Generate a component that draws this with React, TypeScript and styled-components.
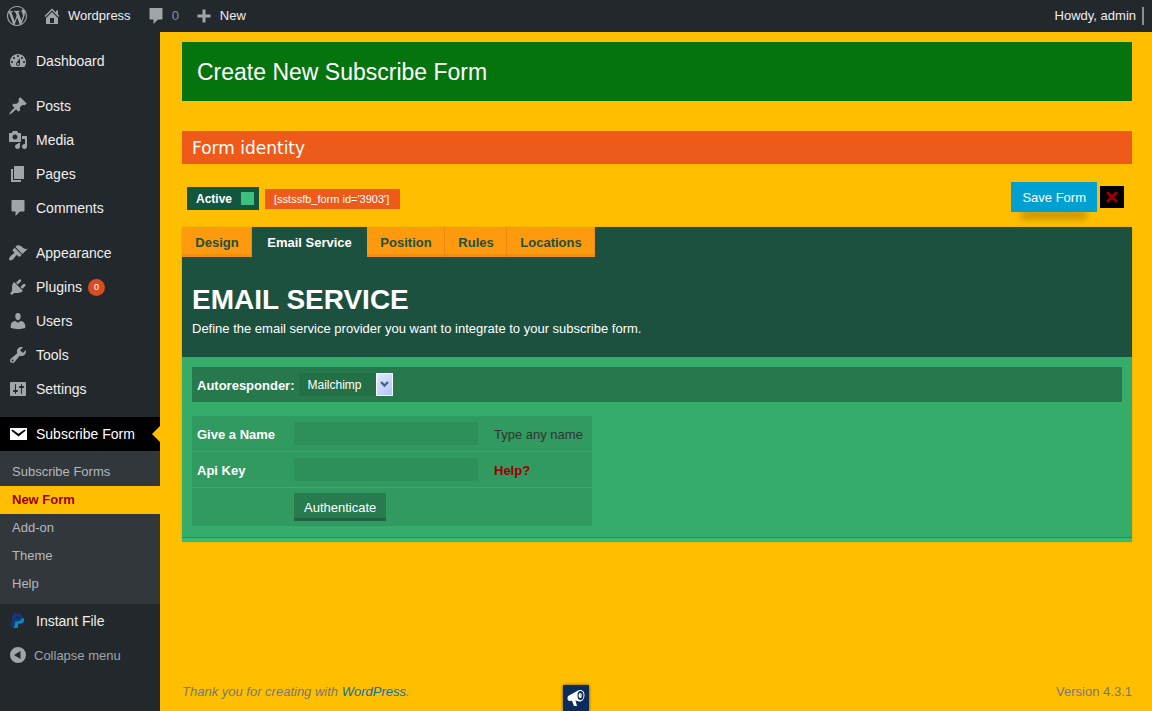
import React from "react";
import styled, { createGlobalStyle, css } from "styled-components";

const GlobalStyle = createGlobalStyle`
  *, *::before, *::after { box-sizing: border-box; }
  html, body { margin: 0; padding: 0; }
  body {
    background: #ffbf00;
    color: #444;
    font-family: "Liberation Sans", Arial, sans-serif;
    font-size: 13px;
    line-height: 18px;
  }
  a { text-decoration: none; }
  h1, h2, p, ul { margin: 0; padding: 0; }
  ul { list-style: none; }
  button, input, select { font-family: inherit; margin: 0; border: 0; border-radius: 0; }
`;

const icons = {
  wordpress:
    "M20 10c0-5.51-4.49-10-10-10C4.48 0 0 4.49 0 10c0 5.52 4.48 10 10 10 5.51 0 10-4.48 10-10zM7.78 15.37L4.37 6.22c.55-.02 1.17-.08 1.17-.08.5-.06.44-1.13-.06-1.11 0 0-1.45.11-2.37.11-.18 0-.37 0-.58-.01C4.12 2.69 6.87 1.11 10 1.11c2.33 0 4.45.87 6.05 2.34-.68-.11-1.65.39-1.65 1.58 0 .74.45 1.36.9 2.1.35.61.55 1.36.55 2.46 0 1.49-1.4 5-1.4 5l-3.03-8.37c.54-.02.82-.17.82-.17.5-.05.44-1.25-.06-1.22 0 0-1.44.12-2.38.12-.87 0-2.33-.12-2.33-.12-.5-.03-.56 1.2-.06 1.22l.92.08 1.26 3.41zM17.41 10c.24-.64.74-1.87.43-4.25.7 1.29 1.05 2.71 1.05 4.25 0 3.29-1.73 6.24-4.4 7.78.97-2.59 1.94-5.2 2.92-7.78zM6.1 18.09C3.12 16.65 1.11 13.53 1.11 10c0-1.3.23-2.48.72-3.59C3.25 10.3 4.67 14.2 6.1 18.09zm4.03-6.63l2.58 6.98c-.86.29-1.76.45-2.71.45-.79 0-1.57-.11-2.29-.33.81-2.38 1.62-4.74 2.42-7.1z",
  home: "M16 8.5l1.53 1.53-1.06 1.06L10 4.6l-6.47 6.49-1.06-1.06L10 2.5l4 4v-2h2v4zm-6-2.46l6 5.99V18H4v-5.97zM12 17v-5H8v5h4z",
  comment:
    "M4.5 2h11c.6 0 1 .4 1 1v9.5c0 .6-.4 1-1 1H12L7.500 18v-4.500h-3c-.6 0-1-.4-1-1V3c0-.6.4-1 1-1z",
  plus: "M8.5 3.5h3v5h5v3h-5v5h-3v-5h-5v-3h5z",
  dashboard:
    "M3.76 16h12.48c1.1-1.37 1.76-3.11 1.76-5 0-4.42-3.58-8-8-8s-8 3.58-8 8c0 1.89.66 3.63 1.76 5zM10 4c.55 0 1 .45 1 1s-.45 1-1 1-1-.45-1-1 .45-1 1-1zM6 6c.55 0 1 .45 1 1s-.45 1-1 1-1-.45-1-1 .45-1 1-1zm8 0c.55 0 1 .45 1 1s-.45 1-1 1-1-.45-1-1 .45-1 1-1zm-5.37 5.55L12 7v6c0 1.1-.9 2-2 2s-2-.9-2-2c0-.57.24-1.08.63-1.45zM4 10c.55 0 1 .45 1 1s-.45 1-1 1-1-.45-1-1 .45-1 1-1zm12 0c.55 0 1 .45 1 1s-.45 1-1 1-1-.45-1-1 .45-1 1-1zm-5 3c0-.55-.45-1-1-1s-1 .45-1 1 .45 1 1 1 1-.45 1-1z",
  posts:
    "M10.44 3.02l1.82-1.82 6.36 6.35-1.83 1.82c-1.05-.68-2.48-.57-3.41.36l-.75.75c-.92.93-1.04 2.35-.35 3.41l-1.83 1.82-2.41-2.41-2.8 2.79c-.42.42-3.38 2.71-3.8 2.29s1.86-3.39 2.28-3.81l2.79-2.79L4.1 9.36l1.83-1.82c1.05.69 2.48.57 3.4-.36l.75-.75c.93-.92 1.05-2.35.36-3.41z",
  media:
    "M13 11V4c0-.55-.45-1-1-1h-1.67L9 1H5L3.67 3H2c-.55 0-1 .45-1 1v7c0 .55.45 1 1 1h10c.55 0 1-.45 1-1zM7 4.5c1.38 0 2.5 1.12 2.5 2.5S8.38 9.5 7 9.5 4.5 8.38 4.5 7 5.62 4.5 7 4.5zM14 6h5v10.5c0 1.38-1.12 2.5-2.5 2.5S14 17.88 14 16.5s1.12-2.5 2.5-2.5c.17 0 .34.02.5.05V9h-3V6zm-4 8.05V13h2v3.5c0 1.38-1.12 2.5-2.5 2.5S7 17.88 7 16.5 8.12 14 9.5 14c.17 0 .34.02.5.05z",
  pages: "M6 15V2h10v13H6zm-1 1h8v2H3V5h2v11z",
  appearance:
    "M14.48 11.06L7.41 3.99l1.5-1.5c.5-.56 2.3-.47 3.51.32 1.21.8 1.43 1.28 2.91 2.1 1.18.64 2.45 1.26 4.45.85zm-.71.71L6.7 4.7 4.93 6.47c-.39.39-.39 1.02 0 1.41l1.06 1.06c.39.39.39 1.03 0 1.42-.6.6-1.43 1.11-2.21 1.69-.35.26-.7.53-1.01.84C1.43 14.23.4 16.08 1.4 17.07c.99 1 2.84-.03 4.18-1.36.31-.31.58-.66.85-1.02.57-.78 1.08-1.61 1.69-2.21.39-.39 1.02-.39 1.41 0l1.06 1.06c.39.39 1.02.39 1.41 0z",
  plugins:
    "M13.11 4.36L9.87 7.6 8 5.73l3.24-3.24c.35-.34 1.05-.2 1.56.32.52.51.66 1.21.31 1.55zm-8 1.77l.91-1.12 9.01 9.01-1.19.84c-.71.71-2.63 1.16-3.82 1.16H6.14L4.9 17.26c-.59.59-1.54.59-2.12 0-.59-.58-.59-1.53 0-2.12l1.24-1.24v-3.88c0-1.13.4-3.19 1.09-3.89zm7.26 3.97l3.24-3.24c.34-.35 1.04-.21 1.55.31.52.51.66 1.21.31 1.55l-3.24 3.25z",
  users:
    "M10 9.25c-2.27 0-2.73-3.44-2.73-3.44C7 4.02 7.82 2 9.97 2c2.16 0 2.98 2.02 2.71 3.81 0 0-.41 3.44-2.68 3.44zm0 2.57L12.72 10c2.39 0 4.52 2.33 4.52 4.53v2.49s-3.65 1.13-7.24 1.13c-3.65 0-7.24-1.13-7.24-1.13v-2.49c0-2.25 1.94-4.48 4.47-4.48z",
  tools:
    "M16.68 9.77c-1.34 1.34-3.3 1.67-4.95.99l-5.41 6.52c-.99.99-2.59.99-3.58 0s-.99-2.59 0-3.57l6.52-5.42c-.68-1.65-.35-3.61.99-4.95 1.28-1.28 3.12-1.62 4.72-1.06l-2.89 2.89 2.82 2.82 2.86-2.87c.53 1.58.18 3.39-1.08 4.65zM3.81 16.21c.4.39 1.04.39 1.43 0 .4-.4.4-1.04 0-1.43-.39-.4-1.03-.4-1.43 0-.39.39-.39 1.03 0 1.43z",
  settings:
    "M18 16V4c0-.55-.45-1-1-1H3c-.55 0-1 .45-1 1v12c0 .55.45 1 1 1h14c.55 0 1-.45 1-1zM8 11h1c.55 0 1 .45 1 1s-.45 1-1 1H8v1.5c0 .28-.22.5-.5.5s-.5-.22-.5-.5V13H6c-.55 0-1-.45-1-1s.45-1 1-1h1V5.5c0-.28.22-.5.5-.5s.5.22.5.5V11zm5-2h-1c-.55 0-1-.45-1-1s.45-1 1-1h1V5.5c0-.28.22-.5.5-.5s.5.22.5.5V7h1c.55 0 1 .45 1 1s-.45 1-1 1h-1v5.5c0 .28-.22.5-.5.5s-.5-.22-.5-.5V9z",
  email:
    "M2 4h17v12H2zM10.49 12.6l6.74-5.53c.24-.2.43-.66.13-1.07-.29-.41-.82-.42-1.17-.17l-5.7 3.86L4.8 5.83c-.35-.25-.88-.24-1.17.17-.3.41-.11.87.13 1.07z",
  collapse: "M10 2a8 8 0 1 0 0 16 8 8 0 0 0 0-16zM12.5 6v8L6 10z",
};

type IconName = keyof typeof icons;

const IconSvg = styled.svg`
  display: block;
  flex: none;
  fill: currentColor;
`;

const Icon = ({ name }: { name: IconName }) => (
  <IconSvg width="20" height="20" viewBox="0 0 20 20" fillRule="evenodd" aria-hidden="true">
    <path d={icons[name]} />
  </IconSvg>
);

const PaypalIcon = () => (
  <IconSvg width="20" height="20" viewBox="0 0 20 20" aria-hidden="true">
    <path fill="#0f84bd" d="M7.5 7h7c1.400 0 2 1 1.600 2.500-.5 2.200-2 3.200-4.100 3.200h-1.500L9.700 17H5.500z" />
    <path fill="#12387a" d="M5 2.500h6c2.600 0 3.800 1.300 3.300 3.700-.6 2.800-2.400 4-5.100 4H7.400L6.300 15.500H2.500z" />
    <path fill="#23282d" d="M7.900 5h1.700c1 0 1.500.4 1.300 1.200-.2 1-.9 1.400-1.900 1.400H7.400z" opacity=".6" />
  </IconSvg>
);

const Page = styled.div`
  display: flex;
  flex-direction: column;
  min-height: 100vh;
`;

const AdminBar = styled.header`
  display: flex;
  align-items: center;
  justify-content: space-between;
  height: 32px;
  padding: 0 8px 0 7px;
  background: #23282d;
`;

const BarGroup = styled.nav`
  display: flex;
  align-items: center;
  gap: 15px;
`;

const BarLink = styled.a<{ $muted?: boolean }>`
  display: flex;
  align-items: center;
  gap: 6px;
  color: ${(p) => (p.$muted ? "#8c9195" : "#eee")};
  svg { color: #a0a5aa; }
`;

const Avatar = styled.span`
  width: 2px;
  height: 18px;
  background: #8c8f92;
`;

const Columns = styled.div`
  display: flex;
  flex: 1;
`;

const Sidebar = styled.nav`
  flex: none;
  width: 160px;
  padding-top: 12px;
  background: #23282d;
`;

const MenuItem = styled.li<{ $gap?: boolean }>`
  margin-top: ${(p) => (p.$gap ? 11 : 0)}px;
`;

const menuRow = css`
  position: relative;
  display: flex;
  align-items: center;
  gap: 8px;
  width: 100%;
  height: 34px;
  padding: 0 8px;
  font-size: 14px;
`;

const MenuLink = styled.a<{ $current?: boolean }>`
  ${menuRow}
  background: ${(p) => (p.$current ? "#000" : "transparent")};
  color: ${(p) => (p.$current ? "#fff" : "#eee")};
  svg { color: ${(p) => (p.$current ? "#fff" : "#a0a5aa")}; }
  ${(p) =>
    p.$current &&
    css`
      &::after {
        content: "";
        position: absolute;
        right: 0;
        top: 9px;
        border: 8px solid transparent;
        border-left-width: 0;
        border-right-color: #ffbf00;
      }
    `}
`;

const CollapseButton = styled.button`
  ${menuRow}
  gap: 6px;
  background: transparent;
  color: #a0a5aa;
  font-size: 13px;
`;

const Count = styled.span`
  width: 17px;
  height: 17px;
  margin-left: -2px;
  border-radius: 9px;
  background: #d54e21;
  color: #fff;
  font-size: 9px;
  line-height: 17px;
  text-align: center;
`;

const Submenu = styled.ul`
  padding: 7px 0 6px;
  background: #32373c;
`;

const SubLink = styled.a<{ $current?: boolean }>`
  display: block;
  padding: 5px 12px;
  background: ${(p) => (p.$current ? "#ffbf00" : "transparent")};
  color: ${(p) => (p.$current ? "#900" : "#b4b9be")};
  font-weight: ${(p) => (p.$current ? 700 : 400)};
`;

const Content = styled.div`
  display: flex;
  flex: 1;
  flex-direction: column;
  min-width: 0;
  padding: 10px 20px 10px 22px;
`;

const Title = styled.h1`
  padding: 16px 15px 14px;
  background: #05740f;
  color: #fff;
  font-size: 23px;
  font-weight: 400;
  line-height: 29px;
`;

const IdentityTitle = styled.h2`
  margin-top: 30px;
  padding: 1px 10px 0;
  background: #ee5a1a;
  color: #fff;
  font-family: "DejaVu Sans", Verdana, sans-serif;
  font-size: 17px;
  font-weight: 400;
  line-height: 32px;
`;

const Toolbar = styled.div`
  display: flex;
  align-items: center;
  justify-content: space-between;
  height: 63px;
  padding: 3px 8px 0 5px;
`;

const Status = styled.div`
  display: flex;
  align-items: center;
  gap: 6px;
  padding-top: 3px;
`;

const ActiveToggle = styled.label`
  display: flex;
  align-items: center;
  gap: 9px;
  height: 23px;
  padding: 0 5px 0 9px;
  background: #12563f;
  color: #fff;
  font-size: 12px;
  font-weight: 700;
`;

const Checkbox = styled.input`
  appearance: none;
  width: 13px;
  height: 13px;
  background: #14573f;
  &:checked { background: #3bc17b; }
`;

const Shortcode = styled.input`
  width: 135px;
  height: 20px;
  padding: 0 9px;
  background: #ee5a1a;
  color: #fff;
  font-size: 11px;
`;

const Actions = styled.div`
  display: flex;
  align-items: center;
  gap: 3px;
`;

const SaveButton = styled.button`
  height: 30px;
  padding: 0 11px;
  background: #00a0d2;
  color: #fff;
  font-size: 13px;
  box-shadow: 0 18px 6px -10px rgba(0, 0, 0, 0.2);
`;

const DeleteButton = styled.button`
  display: flex;
  align-items: center;
  justify-content: center;
  width: 24px;
  height: 22px;
  padding: 0;
  background: #000;
`;

const Panel = styled.section`
  background: #1c5140;
  box-shadow: 0 0 2px rgba(0, 0, 0, 0.15);
`;

const Tabs = styled.div`
  display: grid;
  grid-template-columns: 70px 115px 78px 62px 88px;
  grid-auto-rows: 30px;
`;

const Tab = styled.button<{ $current?: boolean }>`
  padding: 1px 0 0;
  background: ${(p) => (p.$current ? "#1c5140" : "#ff9a0f")};
  box-shadow: ${(p) => (p.$current ? "none" : "inset -1px 0 #e88b0e, inset 0 -3px #ee8f0e")};
  color: ${(p) => (p.$current ? "#fff" : "#1c5140")};
  font-size: 13px;
  font-weight: 700;
  white-space: nowrap;
`;

const PanelHeader = styled.div`
  height: 100px;
  padding: 26px 10px 0;
  color: #fff;
  h2 {
    font-size: 28px;
    line-height: 34px;
  }
  p { line-height: 24px; }
`;

const PanelBody = styled.div`
  padding: 10px 10px 11px;
  border-bottom: 1px solid #2b8c58;
  background: #35ac6a;
`;

const PanelEdge = styled.div`
  height: 4px;
  background: #3abb75;
`;

const ProviderRow = styled.div`
  display: flex;
  align-items: center;
  gap: 4px;
  height: 35px;
  padding: 0 5px;
  background: #27784c;
  color: #fff;
  label {
    padding-top: 2px;
    font-weight: 700;
  }
`;

const SelectBox = styled.span`
  position: relative;
  display: flex;
  width: 94px;
  height: 23px;
`;

const Select = styled.select`
  appearance: none;
  width: 100%;
  height: 100%;
  padding: 0 18px 0 9px;
  background: #237047;
  color: #fff;
  font-size: 12px;
`;

const SelectArrow = styled.span`
  position: absolute;
  top: 0;
  right: 0;
  display: flex;
  align-items: center;
  justify-content: center;
  width: 17px;
  height: 23px;
  border: 1px solid #fff;
  background: linear-gradient(135deg, #dfe9ff, #afc8f7);
  pointer-events: none;
`;

const Fields = styled.table`
  width: 400px;
  margin-top: 14px;
  border-spacing: 0;
  background: #309a61;
  color: #333;
  th {
    width: 102px;
    padding: 2px 5px 0;
    color: #fff;
    text-align: left;
  }
  td { padding: 0; }
  td:last-child {
    width: 98px;
    padding-top: 2px;
  }
  tr { height: 36px; }
  tr:not(:last-child) > * { border-bottom: 1px solid #35ac6a; }
  tr:last-child { height: 38px; }
`;

const TextInput = styled.input`
  display: block;
  width: 184px;
  height: 23px;
  padding: 0 5px;
  background: #2d8f59;
  color: #fff;
  font-size: 13px;
`;

const HelpLink = styled.a`
  color: #900;
  font-weight: 700;
`;

const AuthButton = styled.button`
  display: block;
  height: 28px;
  padding: 1px 10px 0;
  background: #277b4e;
  box-shadow: inset 0 -3px #20653f;
  color: #fff;
  font-size: 13px;
`;

const Footer = styled.footer`
  display: flex;
  justify-content: space-between;
  margin-top: auto;
  color: #777;
  a { color: #0073aa; }
`;

const Notifier = styled.button`
  position: fixed;
  bottom: 0;
  left: 50%;
  display: flex;
  align-items: center;
  justify-content: center;
  width: 26px;
  height: 26px;
  margin-left: -13px;
  padding: 0;
  background: #0b2c5c;
  box-shadow: 0 0 3px rgba(0, 0, 0, 0.6);
`;

type Entry = { icon: IconName; label: string; gap?: boolean; count?: number };

const entries: Entry[] = [
  { icon: "dashboard", label: "Dashboard" },
  { icon: "posts", label: "Posts", gap: true },
  { icon: "media", label: "Media" },
  { icon: "pages", label: "Pages" },
  { icon: "comment", label: "Comments" },
  { icon: "appearance", label: "Appearance", gap: true },
  { icon: "plugins", label: "Plugins", count: 0 },
  { icon: "users", label: "Users" },
  { icon: "tools", label: "Tools" },
  { icon: "settings", label: "Settings" },
];

const subEntries = ["Subscribe Forms", "New Form", "Add-on", "Theme", "Help"];
const tabs = ["Design", "Email Service", "Position", "Rules", "Locations"];

export default function App() {
  return (
    <Page>
      <GlobalStyle />
      <AdminBar>
        <BarGroup>
          <BarLink href="#" aria-label="About WordPress"><Icon name="wordpress" /></BarLink>
          <BarLink href="#"><Icon name="home" />Wordpress</BarLink>
          <BarLink href="#" $muted><Icon name="comment" />0</BarLink>
          <BarLink href="#"><Icon name="plus" />New</BarLink>
        </BarGroup>
        <BarLink href="#">Howdy, admin<Avatar /></BarLink>
      </AdminBar>
      <Columns>
        <Sidebar>
          <ul>
            {entries.map((e) => (
              <MenuItem key={e.label} $gap={e.gap}>
                <MenuLink href="#">
                  <Icon name={e.icon} />
                  {e.label}
                  {e.count !== undefined && <Count>{e.count}</Count>}
                </MenuLink>
              </MenuItem>
            ))}
            <MenuItem $gap>
              <MenuLink href="#" $current><Icon name="email" />Subscribe Form</MenuLink>
              <Submenu>
                {subEntries.map((s) => (
                  <li key={s}><SubLink href="#" $current={s === "New Form"}>{s}</SubLink></li>
                ))}
              </Submenu>
            </MenuItem>
            <MenuItem>
              <MenuLink href="#"><PaypalIcon />Instant File</MenuLink>
            </MenuItem>
            <MenuItem>
              <CollapseButton type="button"><Icon name="collapse" />Collapse menu</CollapseButton>
            </MenuItem>
          </ul>
        </Sidebar>
        <Content>
          <main>
            <Title>Create New Subscribe Form</Title>
            <IdentityTitle>Form identity</IdentityTitle>
            <Toolbar>
              <Status>
                <ActiveToggle>Active<Checkbox type="checkbox" defaultChecked /></ActiveToggle>
                <Shortcode readOnly aria-label="Shortcode" value="[sstssfb_form id='3903']" />
              </Status>
              <Actions>
                <SaveButton type="button">Save Form</SaveButton>
                <DeleteButton type="button" aria-label="Delete form">
                  <svg width="12" height="12" viewBox="0 0 12 12" aria-hidden="true">
                    <path d="M2 2l8 8M10 2l-8 8" stroke="#a00000" strokeWidth="3" strokeLinecap="round" />
                  </svg>
                </DeleteButton>
              </Actions>
            </Toolbar>
            <Panel>
              <Tabs role="tablist">
                {tabs.map((t) => (
                  <Tab key={t} type="button" role="tab" aria-selected={t === "Email Service"} $current={t === "Email Service"}>
                    {t}
                  </Tab>
                ))}
              </Tabs>
              <PanelHeader>
                <h2>EMAIL SERVICE</h2>
                <p>Define the email service provider you want to integrate to your subscribe form.</p>
              </PanelHeader>
              <PanelBody>
                <ProviderRow>
                  <label htmlFor="provider">Autoresponder:</label>
                  <SelectBox>
                    <Select id="provider" defaultValue="Mailchimp">
                      <option>Mailchimp</option>
                    </Select>
                    <SelectArrow>
                      <svg width="9" height="7" viewBox="0 0 9 7" aria-hidden="true">
                        <path d="M1 1l3.500 3.500L8 1" fill="none" stroke="#4d6185" strokeWidth="2.400" />
                      </svg>
                    </SelectArrow>
                  </SelectBox>
                </ProviderRow>
                <Fields>
                  <tbody>
                    <tr>
                      <th scope="row"><label htmlFor="name">Give a Name</label></th>
                      <td><TextInput id="name" type="text" /></td>
                      <td>Type any name</td>
                    </tr>
                    <tr>
                      <th scope="row"><label htmlFor="key">Api Key</label></th>
                      <td><TextInput id="key" type="text" /></td>
                      <td><HelpLink href="#">Help?</HelpLink></td>
                    </tr>
                    <tr>
                      <th />
                      <td><AuthButton type="button">Authenticate</AuthButton></td>
                      <td />
                    </tr>
                  </tbody>
                </Fields>
              </PanelBody>
              <PanelEdge />
            </Panel>
          </main>
          <Footer>
            <em>Thank you for creating with <a href="#">WordPress</a>.</em>
            <span>Version 4.3.1</span>
          </Footer>
        </Content>
      </Columns>
      <Notifier type="button" aria-label="Announcements">
        <svg width="20" height="20" viewBox="0 0 20 20" aria-hidden="true">
          <path d="M3 7.500L12 2.500c3-1.600 6.500.5 6.500 4.500s-2.500 7-5.500 6.500L9.500 12.500l1.500 5.500H8L6 12.800 3.500 13C1 12.500.8 8.800 3 7.500z" fill="#fff" />
          <ellipse cx="14.500" cy="7.500" rx="3" ry="4.500" fill="#0b2c5c" />
          <ellipse cx="14.200" cy="7.500" rx="1.600" ry="2.600" fill="#fff" />
          <circle cx="14.800" cy="7.500" r="1" fill="#f0b93a" />
        </svg>
      </Notifier>
    </Page>
  );
}
